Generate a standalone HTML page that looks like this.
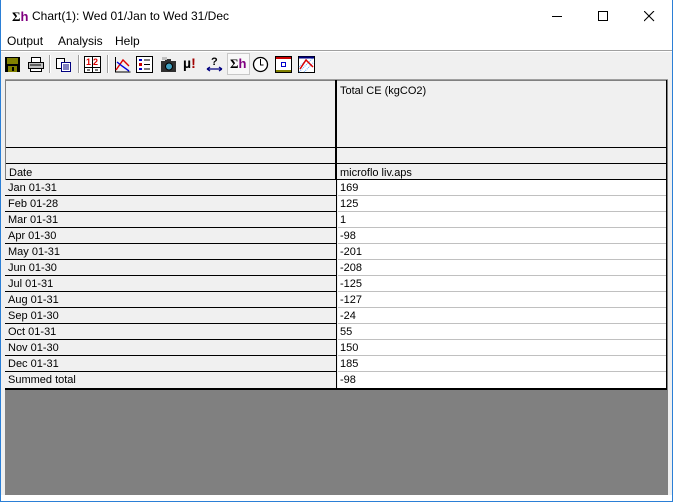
<!DOCTYPE html>
<html><head><style>
*{margin:0;padding:0;box-sizing:border-box}
body{width:673px;height:502px;overflow:hidden;background:#fff;font-family:"Liberation Sans",sans-serif;position:relative}
.a{position:absolute}
.t{font-size:12px;color:#000;white-space:nowrap}
.ic{position:absolute;top:56px;width:17px;height:17px}
.row{position:absolute;left:5px;width:661px;height:16px}
.row .l{position:absolute;left:0;width:331px;height:16px;background:#f0f0f0;border-bottom:1px solid #000;font-size:11px;padding-left:3px;line-height:16px}
.row .r{position:absolute;left:333px;width:328px;height:16px;background:#fff;border-bottom:1px solid #c0c0c0;font-size:11px;padding-left:2px;line-height:16px}
</style></head><body>
<div class="a" style="left:0;top:0;width:673px;height:502px;border:1px solid #2b7fd6;border-top:none"></div>
<div class="a t" style="left:12px;top:9px;font-weight:bold;font-size:13px;font-family:'Liberation Serif',serif">Σ<span style="color:#800080;font-family:'Liberation Sans'">h</span></div>
<div class="a t" style="left:32px;top:9px">Chart(1): Wed 01/Jan to Wed 31/Dec</div>
<div class="a" style="left:552px;top:16px;width:10px;height:1px;background:#000"></div>
<div class="a" style="left:598px;top:11px;width:10px;height:10px;border:1px solid #000"></div>
<svg class="a" style="left:644px;top:11px" width="11" height="11"><path d="M0 0L10 10M10 0L0 10" stroke="#000" stroke-width="1.1"/></svg>
<div class="a t" style="left:7px;top:34px">Output</div>
<div class="a t" style="left:58px;top:34px">Analysis</div>
<div class="a t" style="left:115px;top:34px">Help</div>
<div class="a" style="left:1px;top:50px;width:671px;height:445px;background:#f0f0f0;border-top:1px solid #a0a0a0"></div>
<div class="a" style="left:1px;top:51px;width:671px;height:1px;background:#fff"></div>
<svg class="ic" style="left:4px"><rect x="1" y="1" width="15" height="15" fill="#000"/><rect x="3" y="2" width="11" height="6" fill="#808000"/><rect x="4" y="10" width="9" height="6" fill="#808000"/><rect x="8" y="11" width="2" height="4" fill="#000"/></svg>
<svg class="ic" style="left:27px"><rect x="4.5" y="1.5" width="9" height="5" fill="#fff" stroke="#000"/><rect x="1.5" y="6.5" width="15" height="6" fill="#c0c0c0" stroke="#000"/><rect x="3.5" y="12.5" width="11" height="3" fill="#fff" stroke="#000"/><path d="M3 9h11" stroke="#000"/></svg>
<div class="a" style="left:49px;top:55px;width:2px;height:18px;border-left:1px solid #a0a0a0;border-right:1px solid #fff"></div>
<svg class="ic" style="left:55px"><rect x="1.5" y="2.5" width="8" height="10" fill="#fff" stroke="#000"/><rect x="6.5" y="6.5" width="9" height="9" fill="#fff" stroke="#000080"/><path d="M8 9h6M8 11h6M8 13h6" stroke="#000080"/></svg>
<div class="a" style="left:78px;top:55px;width:2px;height:18px;border-left:1px solid #a0a0a0;border-right:1px solid #fff"></div>
<svg class="ic" style="left:84px"><rect x="0.5" y="0.5" width="16" height="16" fill="#fff" stroke="#000"/><text x="2" y="9" font-size="9" font-weight="bold" fill="#d00" font-family="Liberation Sans">1</text><text x="9" y="9" font-size="9" font-weight="bold" fill="#d00" font-family="Liberation Sans">2</text><path d="M1 11.5h15M8.5 1v15M3 14h3M11 14h3" stroke="#000"/></svg>
<div class="a" style="left:107px;top:55px;width:2px;height:18px;border-left:1px solid #a0a0a0;border-right:1px solid #fff"></div>
<svg class="ic" style="left:114px"><path d="M1.5 1v15h15" stroke="#000" fill="none"/><path d="M2 14L9 4L15 10" stroke="#d00" fill="none" stroke-width="1.4"/><path d="M3 6L8 10L15 15" stroke="#00d" fill="none" stroke-width="1.4"/></svg>
<svg class="ic" style="left:136px"><rect x="0.5" y="0.5" width="16" height="16" fill="#fff" stroke="#000"/><rect x="3" y="3" width="3" height="2" fill="#00c"/><rect x="3" y="7" width="3" height="3" fill="#c00"/><rect x="3" y="12" width="3" height="2" fill="#00c"/><path d="M8 4h6M8 8.5h6M8 13h6" stroke="#000"/></svg>
<svg class="ic" style="left:160px"><rect x="1" y="5" width="15" height="11" fill="#303030"/><rect x="5" y="3" width="6" height="3" fill="#303030"/><circle cx="9" cy="10.5" r="3.5" fill="#40a0c0" stroke="#000"/><rect x="2" y="1" width="5" height="3" fill="#c0c0c0"/></svg>
<div class="a" style="left:183px;top:55px;font-weight:bold;font-size:14px;font-family:'Liberation Sans',sans-serif">µ<span style="color:#a00000">!</span></div>
<svg class="ic" style="left:206px"><text x="5" y="9" font-size="11" font-weight="bold" font-family="Liberation Sans">?</text><path d="M1 13h15M1 13l3-2M1 13l3 2M16 13l-3-2M16 13l-3 2" stroke="#000080" fill="none" stroke-width="1.3"/></svg>
<div class="a" style="left:227px;top:53px;width:23px;height:22px;background:#f8f8f8;border:1px solid #c8c8c8"></div>
<div class="a" style="left:230px;top:56px;font-weight:bold;font-size:13px;font-family:'Liberation Serif',serif">Σ<span style="color:#800080;font-family:'Liberation Sans'">h</span></div>
<svg class="ic" style="left:252px"><circle cx="8.5" cy="8.5" r="7" fill="#fff" stroke="#000" stroke-width="1.3"/><path d="M8.5 3v6h3" stroke="#000" fill="none"/></svg>
<svg class="ic" style="left:275px"><rect x="0.5" y="0.5" width="16" height="16" fill="#fff" stroke="#000"/><rect x="1" y="1" width="15" height="2" fill="#c00"/><rect x="1" y="14" width="15" height="2" fill="#808000"/><rect x="6.5" y="6.5" width="4" height="4" fill="#fff" stroke="#00c"/></svg>
<svg class="ic" style="left:298px"><rect x="0.5" y="0.5" width="16" height="16" fill="#fff" stroke="#000"/><path d="M1 16L16 1M1 11L11 1M6 16L16 6" stroke="#6af" stroke-dasharray="1 1"/><path d="M2 13L8 4L15 11" stroke="#d00" fill="none" stroke-width="1.5"/><path d="M1 1.5h15" stroke="#000080" stroke-width="2"/></svg>
<div class="a" style="left:5px;top:79px;width:663px;height:416px;background:#808080;border-top:1px solid #a0a0a0"></div>
<div class="a" style="left:5px;top:80px;width:662px;height:309px;background:#f0f0f0;border:1px solid #000;border-left:1px solid #808080;border-top:1px solid #808080"></div>
<div class="a" style="left:335px;top:80px;width:2px;height:308px;background:#000"></div>
<div class="a" style="left:6px;top:147px;width:660px;height:1px;background:#000"></div>
<div class="a" style="left:6px;top:163px;width:660px;height:1px;background:#000"></div>
<div class="a" style="left:6px;top:179px;width:660px;height:1px;background:#000"></div>
<div class="a" style="left:340px;top:85px;font-size:11px">Total CE (kgCO2)</div>
<div class="a" style="left:9px;top:167px;font-size:11px">Date</div>
<div class="a" style="left:340px;top:167px;font-size:11px">microflo liv.aps</div>
<div class="row" style="top:180px"><div class="l">Jan 01-31</div><div class="r">169</div></div>
<div class="row" style="top:196px"><div class="l">Feb 01-28</div><div class="r">125</div></div>
<div class="row" style="top:212px"><div class="l">Mar 01-31</div><div class="r">1</div></div>
<div class="row" style="top:228px"><div class="l">Apr 01-30</div><div class="r">-98</div></div>
<div class="row" style="top:244px"><div class="l">May 01-31</div><div class="r">-201</div></div>
<div class="row" style="top:260px"><div class="l">Jun 01-30</div><div class="r">-208</div></div>
<div class="row" style="top:276px"><div class="l">Jul 01-31</div><div class="r">-125</div></div>
<div class="row" style="top:292px"><div class="l">Aug 01-31</div><div class="r">-127</div></div>
<div class="row" style="top:308px"><div class="l">Sep 01-30</div><div class="r">-24</div></div>
<div class="row" style="top:324px"><div class="l">Oct 01-31</div><div class="r">55</div></div>
<div class="row" style="top:340px"><div class="l">Nov 01-30</div><div class="r">150</div></div>
<div class="row" style="top:356px"><div class="l">Dec 01-31</div><div class="r">185</div></div>
<div class="row" style="top:372px"><div class="l" style="border-bottom:none">Summed total</div><div class="r" style="border-bottom:none">-98</div></div>
<div class="a" style="left:5px;top:388px;width:662px;height:2px;background:#000"></div>
<div class="a" style="left:666px;top:80px;width:1px;height:310px;background:#000"></div>
</body></html>
